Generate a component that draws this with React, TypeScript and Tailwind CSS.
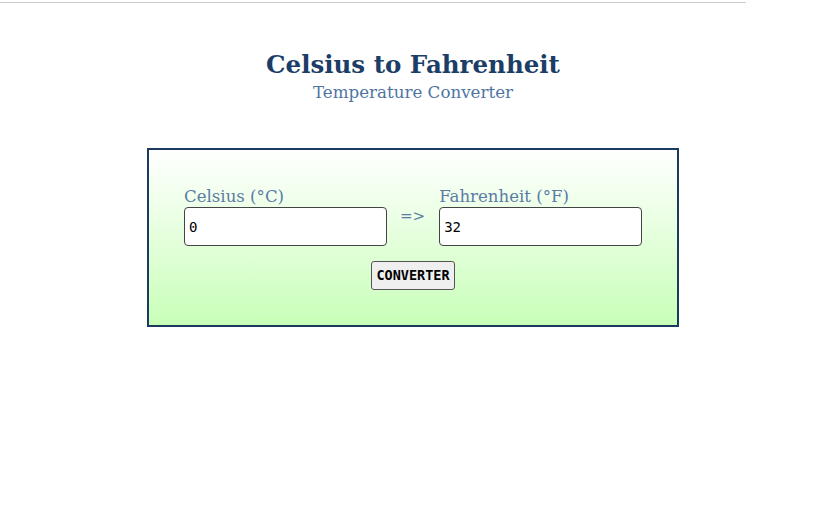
import { useState } from 'react';

export default function App() {
  const [celsius, setCelsius] = useState('0');
  const [fahrenheit, setFahrenheit] = useState('32');

  const convert = () => {
    const c = parseFloat(celsius);
    if (isNaN(c)) return;
    setFahrenheit(String(Math.round((c * 9 / 5 + 32) * 100) / 100));
  };

  return (
    <div className="min-h-screen bg-white">
      <div className="pt-[2px]">
        <div className="h-px w-[746px] bg-[#cccccc]" />
      </div>

      <div className="flex flex-col items-center pl-[7px]">
        <h1 className="mt-[46px] text-[24.5px] leading-[32px] font-bold text-[#1b3d66] [font-family:'DejaVu_Serif',serif]">
          Celsius to Fahrenheit
        </h1>
        <p className="text-[16.7px] leading-[22px] text-[#4e74a3] [font-family:'DejaVu_Serif',serif]">
          Temperature Converter
        </p>

        <div className="mt-[45px] w-[532px] border-2 border-[#1c3a5e] bg-gradient-to-b from-white to-[#c8ffb8] px-[35px] pt-[37px] pb-[35px]">
          <div className="flex items-center gap-[14px]">
            <div className="flex flex-col">
              <label className="text-[16.6px] leading-[20px] text-[#5b7ba5] [font-family:'DejaVu_Serif',serif]">
                Celsius (°C)
              </label>
              <input
                value={celsius}
                onChange={(e) => setCelsius(e.target.value)}
                className="h-[39px] w-[203px] rounded-[4px] border border-[#444444] bg-white pl-[4px] text-[14px] text-black outline-none [font-family:'DejaVu_Sans_Mono',monospace]"
              />
            </div>
            <span className="-ml-px text-[15px] text-[#5b7ba5] [font-family:'DejaVu_Serif',serif]">=&gt;</span>
            <div className="flex flex-col">
              <label className="text-[16.6px] leading-[20px] text-[#5b7ba5] [font-family:'DejaVu_Serif',serif]">
                Fahrenheit (°F)
              </label>
              <input
                value={fahrenheit}
                onChange={(e) => setFahrenheit(e.target.value)}
                className="h-[39px] w-[203px] rounded-[4px] border border-[#444444] bg-white pl-[4px] text-[14px] text-black outline-none [font-family:'DejaVu_Sans_Mono',monospace]"
              />
            </div>
          </div>
          <div className="mt-[15px] flex justify-center">
            <button
              type="button"
              onClick={convert}
              className="h-[29px] w-[84px] rounded-[3px] border border-[#555555] bg-[#efefef] text-[13.5px] font-bold text-black [font-family:'DejaVu_Sans_Mono',monospace]"
            >
              CONVERTER
            </button>
          </div>
        </div>
      </div>
    </div>
  );
}
